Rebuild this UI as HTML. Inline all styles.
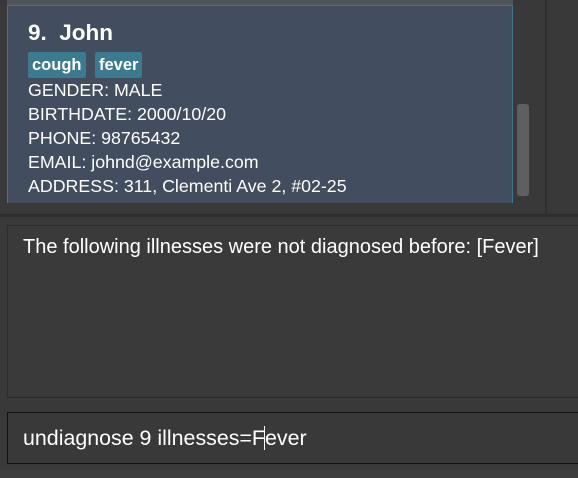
<!DOCTYPE html>
<html><head><style>
body{margin:0;width:578px;height:478px;background:#393939;position:relative;overflow:hidden;font-family:"Liberation Sans",sans-serif;}
.top{position:absolute;left:7px;top:0;width:506px;height:6px;background:#4e5457;}
.card{position:absolute;left:7px;top:5px;width:504px;height:197px;background:#424d5f;border:1px solid #3a7a90;border-bottom:none;}
.name{position:absolute;left:20px;top:14px;font-size:22.5px;font-weight:bold;color:#fff;}
.tag{position:absolute;top:46px;height:26px;background:#3c7a8f;color:#fff;font-weight:bold;font-size:16.5px;line-height:26px;padding:0 4px;border-radius:2px;}
.f{position:absolute;left:20px;color:#fff;font-size:17.8px;}
.thumb{position:absolute;left:517px;top:104px;width:12px;height:92px;background:#5f5f5f;border-radius:3px;}
.vl{position:absolute;left:545px;top:0;width:2px;height:215px;background:#2f2f2f;}
.hl{position:absolute;left:0;top:214px;width:578px;height:3px;background:#2e2e2e;}
.res{position:absolute;left:7px;top:225px;width:580px;height:171px;background:#3a3a3a;border:1px solid #2c2c2c;}
.res span{position:absolute;left:15px;top:10px;color:#fff;font-size:20px;}
.cmd{position:absolute;left:7px;top:412px;width:580px;height:50px;background:#393939;border:1px solid #111;}
.cmd span{position:absolute;left:15px;top:13px;color:#fff;font-size:21.4px;}
.bot{position:absolute;left:0;top:470px;width:578px;height:8px;background:#3e3e3e;}
</style></head><body>
<div class="top"></div>
<div class="card">
<div class="name">9.&nbsp; John</div>
<div class="tag" style="left:20px">cough</div>
<div class="tag" style="left:87px">fever</div>
<div class="f" style="top:74px">GENDER: MALE</div>
<div class="f" style="top:98px">BIRTHDATE: 2000/10/20</div>
<div class="f" style="top:122px">PHONE: 98765432</div>
<div class="f" style="top:146px">EMAIL: johnd@example.com</div>
<div class="f" style="top:170px">ADDRESS: 311, Clementi Ave 2, #02-25</div>
</div>
<div class="thumb"></div>
<div class="vl"></div>
<div class="hl"></div>
<div class="res"><span>The following illnesses were not diagnosed before: [Fever]</span></div>
<div class="cmd"><span>undiagnose 9 illnesses=F<span style="position:static;border-left:1px solid #fff;margin-left:-1px"></span>ever</span></div>
<div class="bot"></div>
</body></html>
